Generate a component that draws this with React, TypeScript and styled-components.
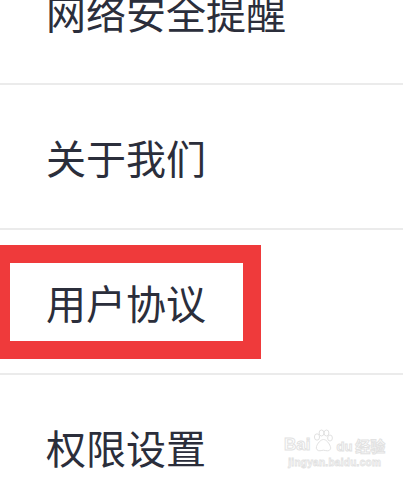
import React from "react";
import styled, { createGlobalStyle } from "styled-components";

const GlobalStyle = createGlobalStyle`
  html, body {
    margin: 0;
    padding: 0;
    background: #ffffff;
    overflow: hidden;
  }
  body {
    font-family: "Noto Sans CJK SC", "Noto Sans", sans-serif;
  }
`;

const Screen = styled.div`
  position: relative;
  width: 403px;
  height: 484px;
  overflow: hidden;
  background: #ffffff;
`;

const MenuList = styled.ul`
  list-style: none;
  margin: -60px 0 0 0;
  padding: 0;
`;

const MenuItem = styled.li`
  display: flex;
  align-items: center;
  height: 143px;
  padding-left: 46px;
  border-bottom: 2px solid #ebebeb;
  font-size: 40px;
  line-height: 1;
  color: #2b2e3b;
  letter-spacing: 0;
`;

const Highlight = styled.div`
  position: absolute;
  left: -8px;
  top: 245px;
  width: 269px;
  height: 114px;
  box-sizing: border-box;
  border: 18px solid #ef3a3b;
  pointer-events: none;
`;

const Watermark = styled.div`
  position: absolute;
  left: 284px;
  top: 429px;
  display: flex;
  flex-direction: column;
  align-items: center;
  color: #ececec;
  font-family: "Liberation Sans", Arial, sans-serif;
`;

const LogoRow = styled.div`
  display: flex;
  align-items: flex-end;
  gap: 1px;
`;

const LogoWord = styled.span<{ size: number }>`
  font-size: ${(p) => p.size}px;
  font-weight: bold;
  line-height: 1;
  color: #ffffff;
  -webkit-text-stroke: 1px #e2e2e2;
`;

const Cn = styled.span`
  font-family: "Noto Sans CJK SC", sans-serif;
  font-size: 15px;
  font-weight: bold;
  line-height: 1;
  margin-left: 2px;
  color: #ffffff;
  -webkit-text-stroke: 1px #e2e2e2;
`;

const Domain = styled.span`
  margin-top: 4px;
  font-size: 10px;
  font-weight: bold;
  color: #ffffff;
  -webkit-text-stroke: 0.8px #e2e2e2;
  letter-spacing: 0.3px;
`;

const Paw = () => (
  <svg width="24" height="24" viewBox="0 0 24 24" fill="#ffffff" stroke="#e2e2e2" strokeWidth="1">
    <ellipse cx="6" cy="8" rx="2.6" ry="3.2" />
    <ellipse cx="10.5" cy="4" rx="2.4" ry="3" />
    <ellipse cx="15.5" cy="4" rx="2.4" ry="3" />
    <ellipse cx="19" cy="9" rx="2.4" ry="3" />
    <path d="M12.5 10.5c-3 0-6 4-7 7-0.8 2.6 1 4.5 3.5 4.3 1.5-0.1 2.3-0.6 3.5-0.6s2.2 0.6 3.8 0.6c2.6 0 4-2 3-4.5-1.2-3-3.8-6.8-6.8-6.8z" />
  </svg>
);

const items = ["网络安全提醒", "关于我们", "用户协议", "权限设置"];

export default function App() {
  return (
    <Screen>
      <GlobalStyle />
      <MenuList>
        {items.map((label) => (
          <MenuItem key={label}>{label}</MenuItem>
        ))}
      </MenuList>
      <Highlight />
      <Watermark>
        <LogoRow>
          <LogoWord size={17}>Bai</LogoWord>
          <Paw />
          <LogoWord size={13}>du</LogoWord>
          <Cn>经验</Cn>
        </LogoRow>
        <Domain>jingyan.baidu.com</Domain>
      </Watermark>
    </Screen>
  );
}
